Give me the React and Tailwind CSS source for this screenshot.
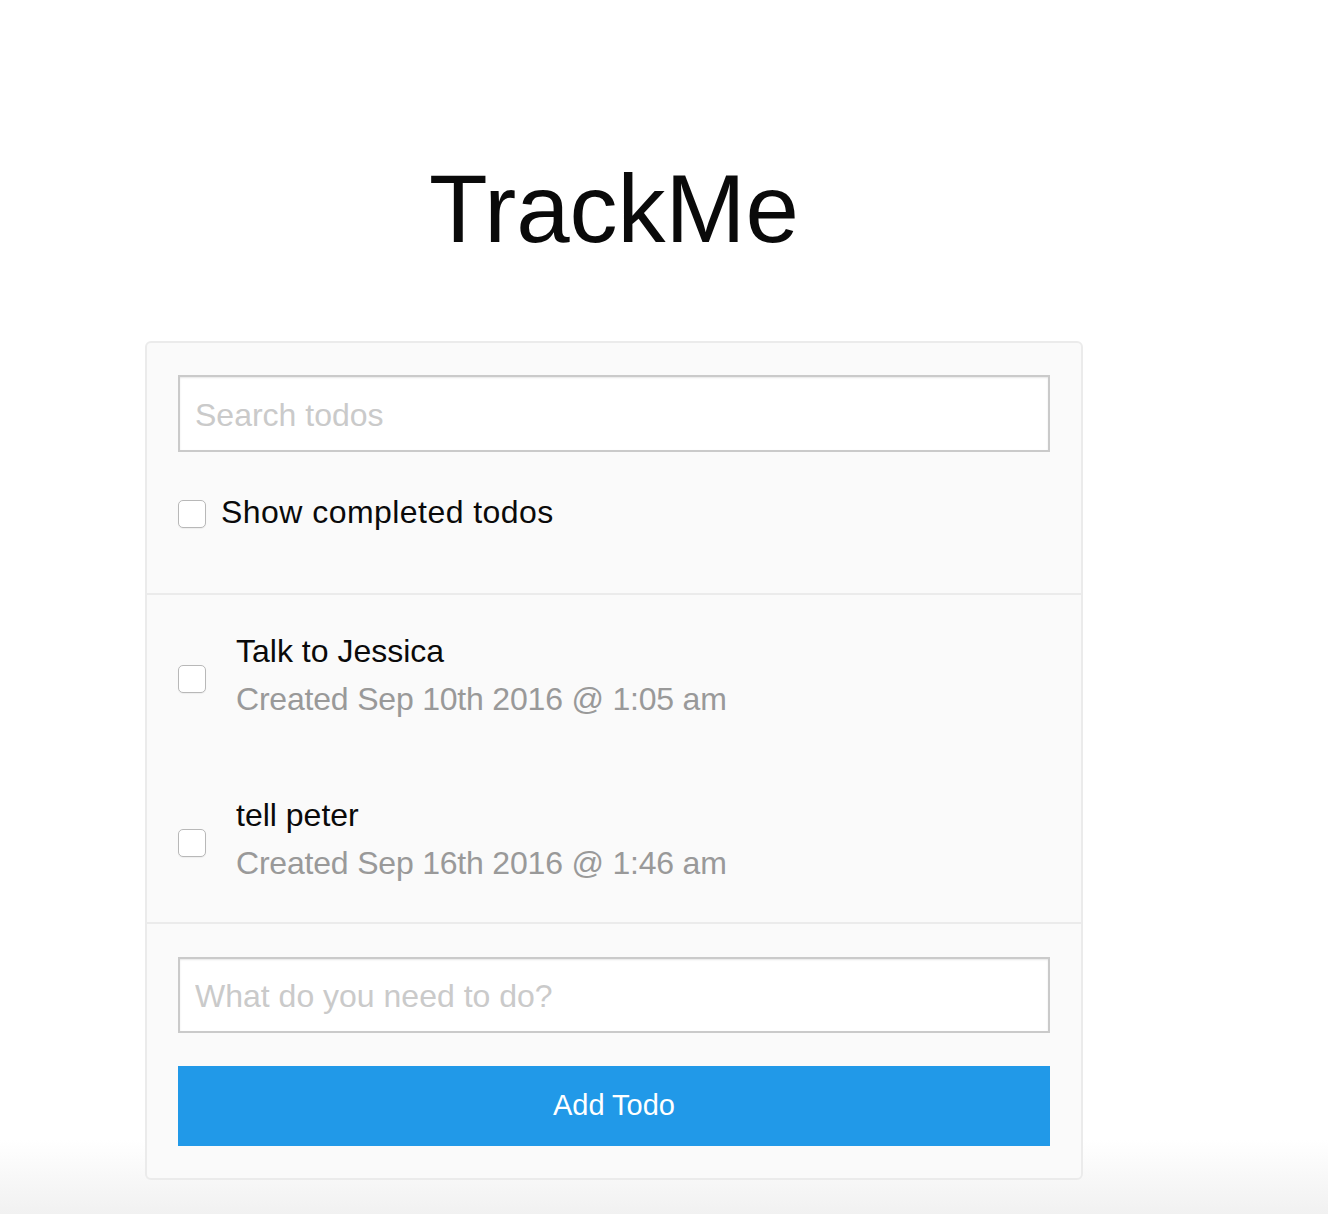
import { useState } from "react";

const todos = [
  { id: 1, text: "Talk to Jessica", created: "Created Sep 10th 2016 @ 1:05 am" },
  { id: 2, text: "tell peter", created: "Created Sep 16th 2016 @ 1:46 am" },
];

function Box({ className = "" }) {
  return (
    <input
      type="checkbox"
      className={`appearance-none shrink-0 w-[28px] h-[28px] rounded-[5px] border border-[#b8b8b8] bg-white shadow-[0_1px_1px_rgba(0,0,0,0.05)] ${className}`}
    />
  );
}

export default function App() {
  const [search, setSearch] = useState("");
  const [text, setText] = useState("");

  return (
    <div
      className="min-h-[1214px] bg-[linear-gradient(to_bottom,#ffffff_0px,#ffffff_1140px,#f1f1f1_1214px)] text-[#0a0a0a]"
      style={{ fontFamily: '"Liberation Sans", Arial, sans-serif' }}
    >
      <div className="ml-[145px] w-[938px] pt-[161px]">
        <h1 className="text-center text-[96px] leading-none font-normal mb-[84px]">TrackMe</h1>

        <div className="bg-[#fafafa] border-2 border-[#ebebeb] rounded-[6px]">
          {/* search */}
          <div className="px-[31px] pt-[32px] pb-[57px] border-b-2 border-[#ebebeb]">
            <input
              type="search"
              value={search}
              onChange={(e) => setSearch(e.target.value)}
              placeholder="Search todos"
              className="block w-full h-[77px] bg-white border-2 border-[#cacaca] pl-[15px] pt-[3px] text-[32px] outline-none shadow-[inset_0_1px_2px_rgba(10,10,10,0.1)] placeholder:text-[#cacaca]"
            />
            <label className="mt-[36px] flex items-center gap-[15px] text-[32px] leading-[48px] tracking-[0.45px]">
              <Box className="mt-[4px]" />
              Show completed todos
            </label>
          </div>

          {/* list */}
          <div className="px-[31px] pt-[32px] pb-[35px] border-b-2 border-[#ebebeb] flex flex-col gap-[68px]">
            {todos.map((t) => (
              <div key={t.id} className="flex items-center gap-[30px]">
                <Box className="mt-[8px]" />
                <div className="text-[32px] leading-[48px]">
                  <p>{t.text}</p>
                  <p className="text-[#999999] tracking-[-0.2px]">{t.created}</p>
                </div>
              </div>
            ))}
          </div>

          {/* add */}
          <div className="px-[31px] pt-[33px] pb-[32px]">
            <input
              type="text"
              value={text}
              onChange={(e) => setText(e.target.value)}
              placeholder="What do you need to do?"
              className="block w-full h-[76px] bg-white border-2 border-[#cacaca] pl-[15px] pt-[3px] text-[32px] outline-none shadow-[inset_0_1px_2px_rgba(10,10,10,0.1)] placeholder:text-[#cacaca]"
            />
            <button className="mt-[33px] block w-full h-[80px] bg-[#2199e8] text-white text-[29px]">
              Add Todo
            </button>
          </div>
        </div>
      </div>
    </div>
  );
}
